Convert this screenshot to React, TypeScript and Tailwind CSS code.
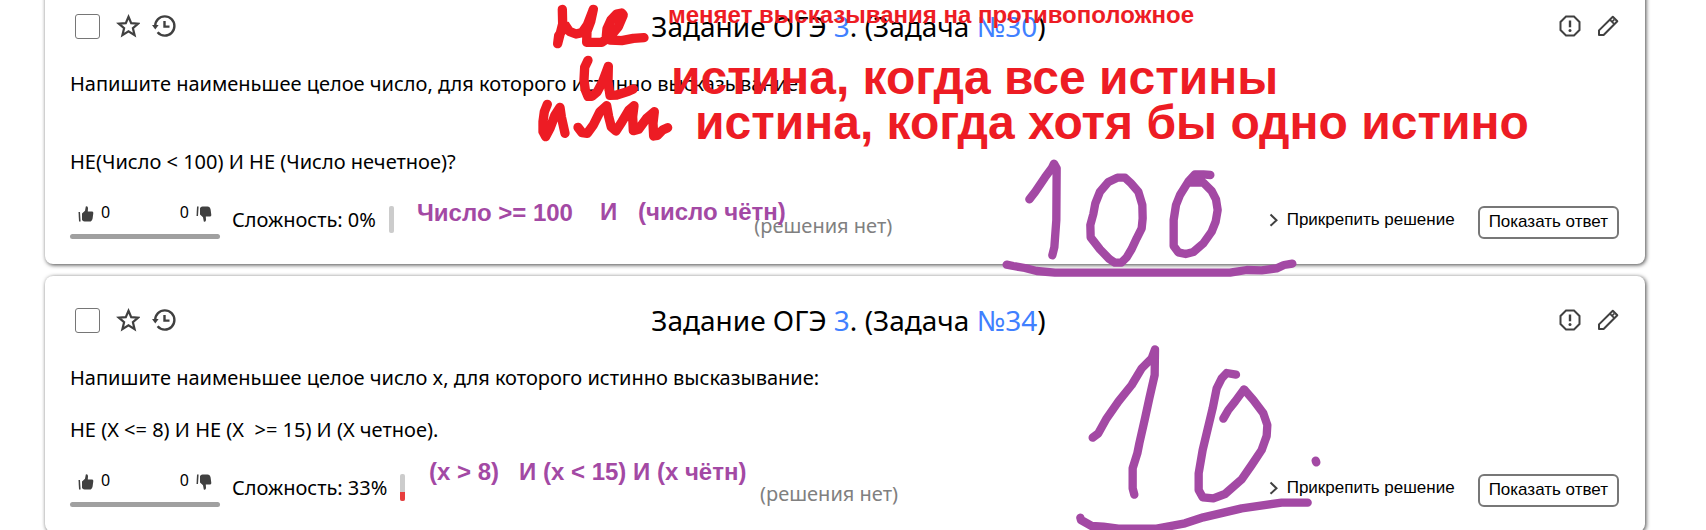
import React from "react";

type Task = {
  id: number;
  lines: string[];
  difficulty: number;
};

const tasks: Task[] = [
  {
    id: 30,
    lines: [
      "Напишите наименьшее целое число, для которого истинно высказывание:",
      "",
      "",
      "НЕ(Число < 100) И НЕ (Число нечетное)?",
    ],
    difficulty: 0,
  },
  {
    id: 34,
    lines: [
      "Напишите наименьшее целое число x, для которого истинно высказывание:",
      "",
      "НЕ (X <= 8) И НЕ (X  >= 15) И (X четное).",
    ],
    difficulty: 33,
  },
];

function StarIcon() {
  return (
    <svg viewBox="0 0 24 24" className="size-6" fill="none" stroke="#404040" strokeWidth="2.2" strokeLinejoin="miter">
      <path d="M12.500 2.800l2.700 6.400 7 .5-5.300 4.500 1.700 7-6.100-3.800-6.100 3.800 1.700-7L2.800 9.700l7-.5z" />
    </svg>
  );
}

function HistoryIcon() {
  return (
    <svg viewBox="0 0 24 24" className="size-6" fill="none" stroke="#404040" strokeWidth="2.4">
      <path d="M3.200 12A9.600 9.600 0 1 1 12.800 21.600A9.600 9.600 0 0 1 5.600 18.200" />
      <path d="M12.500 7v5.600h5" />
      <path d="M0 11h6.600L3.300 15.600z" fill="#404040" stroke="none" />
    </svg>
  );
}

function AlertIcon() {
  return (
    <svg viewBox="0 0 22 22" className="size-[22px]" fill="none" stroke="#404040" strokeWidth="2">
      <path d="M7 1.500h8L20.500 7v8L15 20.500H7L1.500 15V7z" />
      <path d="M11 5.500v6.800" strokeWidth="2.400" />
      <circle cx="11" cy="15.500" r="1.500" fill="#404040" stroke="none" />
    </svg>
  );
}

function PencilIcon() {
  return (
    <svg viewBox="0 0 22 22" className="size-[22px]" fill="none" stroke="#404040" strokeWidth="2" strokeLinejoin="round">
      <path d="M2 20v-4.600L15.800 1.700l4.500 4.500L6.600 20z" />
      <path d="M12.800 4.700l4.500 4.500M15 6.900l2.200-2.200" strokeWidth="1.700" />
    </svg>
  );
}

function ThumbIcon({ down = false }: { down?: boolean }) {
  return (
    <svg viewBox="0 0 16 18" className={down ? "h-[18px] w-4 translate-y-0.5 -scale-y-100" : "h-[18px] w-4 translate-y-0.5"} fill="#404040">
      <path d="M.5 7H2L2.600 16.500H1z" />
      <path d="M4 8.600L7 5.800 7.800 1.500Q9.800.8 10 3L9.800 6.500H14.200Q15.500 6.800 15.300 8.300L14.600 13.500Q14 16.600 11.500 16.600H6.500Q4.500 16.300 4 14.800z" />
    </svg>
  );
}

function TaskCard({ task }: { task: Task }) {
  const boxId = `task-${task.id}`;
  return (
    <article className="rounded-lg bg-white px-[25px] pt-6 pb-[25px] shadow-[1px_1px_4px_#444]">
      <header className="grid grid-cols-[1fr_auto_1fr] items-center">
        <div className="flex items-center gap-3 pl-[5px]">
          <label htmlFor={boxId} className="mr-1 flex">
            <input
              id={boxId}
              type="checkbox"
              aria-label={`Выбрать задачу ${task.id}`}
              className="size-[25px] appearance-none rounded-[3px] border border-[#767676] bg-white"
            />
          </label>
          <button type="button" aria-label="В избранное"><StarIcon /></button>
          <button type="button" aria-label="История"><HistoryIcon /></button>
        </div>
        <h2 className="pl-[7px] text-[28px] leading-10">
          Задание ОГЭ <a href="#topic" className="text-[#4080ff]">3</a>. (Задача{" "}
          <a href={`#${boxId}`} className="text-[#4080ff]">№{task.id}</a>)
        </h2>
        <div className="flex items-center justify-end gap-4 pr-px">
          <button type="button" aria-label="Сообщить об ошибке"><AlertIcon /></button>
          <button type="button" aria-label="Редактировать"><PencilIcon /></button>
        </div>
      </header>

      <p className="mt-[25px] text-[20px] leading-[26px] whitespace-pre-wrap">{task.lines.join("\n")}</p>

      <footer className="mt-[25px] flex items-end justify-between">
        <div className="flex items-end">
          <div className="w-[150px]">
            <div className="flex items-center justify-between px-2 text-base leading-6">
              <button type="button" aria-label="Нравится" className="flex items-center gap-[7px]">
                <ThumbIcon /> 0
              </button>
              <button type="button" aria-label="Не нравится" className="flex items-center gap-[7px]">
                0 <ThumbIcon down />
              </button>
            </div>
            <div className="mt-[10px] h-[5px] rounded-full bg-[#a0a0a0]" />
          </div>
          <span className="mb-[6px] ml-3 text-[20px] leading-[26px]">Сложность: {task.difficulty}%</span>
          <div className="mb-[6px] ml-[13px] flex h-[27px] w-[5px] flex-col justify-end overflow-hidden rounded-xs bg-[#ccc]">
            <div className="bg-[#e83e3e]" style={{ height: `${task.difficulty}%` }} />
          </div>
        </div>
        <span className="text-[20px] leading-[26px] text-[#808080]">(решения нет)</span>
        <div className="flex items-center gap-[23px] pr-px pl-4 font-['Liberation_Sans',sans-serif] text-[17px] leading-[22px]">
          <button type="button" className="mb-[6px] flex items-center gap-2">
            <svg viewBox="0 0 10 14" className="h-3.5 w-2.5" fill="none" stroke="#404040" strokeWidth="2">
              <path d="M1.500 1.500L7.500 7.200 1.500 12.800" />
            </svg>
            Прикрепить решение
          </button>
          <button type="button" className="rounded-md border-2 border-[#777] px-[9px] pt-[3px] pb-1">
            Показать ответ
          </button>
        </div>
      </footer>
    </article>
  );
}

function Handwriting() {
  return (
    <svg viewBox="0 0 1706 530" className="absolute top-0 left-0 h-[530px] w-[1706px]" fill="none" strokeLinecap="round" strokeLinejoin="round">
      <g stroke="#ed1c24" strokeWidth="28" transform="translate(500 0) scale(.33333)">
        <path d="M187 28L188 72 173 131 176 107 197 77 208 94 228 102 246 98 262 75 280 28 272 65 261 94 260 127H305L330 110 355 80 370 45 365 39 350 42 333 60 321 86 319 108 330 120 365 122 400 115 432 113" />
        <path d="M264 181L254 202 252 240 256 270 264 289 276 289 292 275 308 245 325 199 324 245 330 286 350 285 385 274 400 267" />
        <path d="M142 313L133 335 129 365 129 395 137 410 150 385 165 345 180 322 184 350 195 400" />
        <path d="M234 382L246 398 262 400 280 375 300 335 320 317 326 350 334 381 348 393 366 365 387 330 402 317 398 350 400 392 416 388 440 355 463 335 459 370 461 408 472 406 488 390 503 383" />
      </g>
      <g stroke="#a349a4" strokeWidth="25" transform="translate(980 140) scale(.33333)">
        <path d="M148 178L166 155 195 112 215 85 222 71 230 85 229 240 223 322 217 346" />
        <path d="M435 113H412L385 126 360 155 346 190 340 222 331 255 332 292 360 328 388 357 405 368H424L440 352 455 327 470 295 485 265 488 235 487 195 475 155 453 130 435 113" />
        <path d="M691 105L670 103H645L625 125 600 165 588 195 581 240V318L595 337 617 342 640 336 670 310 695 275 707 245 713 210 708 178 695 153 670 128H630L650 112" />
        <path d="M80 374L100 378 135 384 170 393 225 398H750L800 390 845 391 890 385 912 375 937 371" />
      </g>
      <g stroke="#a349a4" strokeWidth="25" transform="translate(1050 330) scale(.33333)">
        <path d="M128 323L145 310 170 265 205 215 245 165 275 115 305 85 315 58 314 135 298 205 285 265 268 340 262 370 248 415V475L253 494" />
        <path d="M558 134L530 129 515 145 500 175 488 235 470 310 458 360 446 430V480L458 502 490 505 525 492 575 448 605 405 635 360 650 318 652 285 640 250 610 210 582 178 555 215 535 240 520 266" />
        <path d="M797 392L799 397" />
        <path d="M91 563L93 570 125 588 160 590 205 596H320L405 580 460 562 575 535 695 518H773" />
      </g>
    </svg>
  );
}

function Annotations() {
  return (
    <div className="pointer-events-none absolute top-0 left-0 font-['Liberation_Sans',sans-serif] font-bold whitespace-pre">
      <div className="text-[#ed1c24]">
        <span className="absolute top-0 left-[668px] text-2xl leading-[30px]">меняет высказывания на противоположное</span>
        <span className="absolute top-[51px] left-[671px] text-[48px] leading-[54px]">истина, когда все истины</span>
        <span className="absolute top-[96px] left-[695px] text-[48px] leading-[54px]">истина, когда хотя бы одно истино</span>
      </div>
      <div className="text-2xl leading-[30px] text-[#a349a4]">
        <span className="absolute top-[198px] left-[417px]">Число &gt;= 100</span>
        <span className="absolute top-[197px] left-[600px]">И</span>
        <span className="absolute top-[197px] left-[638px]">(число чётн)</span>
        <span className="absolute top-[457px] left-[429px]">(x &gt; 8)   И (x &lt; 15) И (x чётн)</span>
      </div>
      <Handwriting />
    </div>
  );
}

export default function App() {
  return (
    <main className="relative h-screen overflow-hidden bg-white font-['Noto_Sans',sans-serif] text-black">
      <div className="-mt-[18px] flex flex-col gap-3 pr-[61px] pl-[45px]">
        {tasks.map((task) => (
          <TaskCard key={task.id} task={task} />
        ))}
      </div>
      <Annotations />
    </main>
  );
}
